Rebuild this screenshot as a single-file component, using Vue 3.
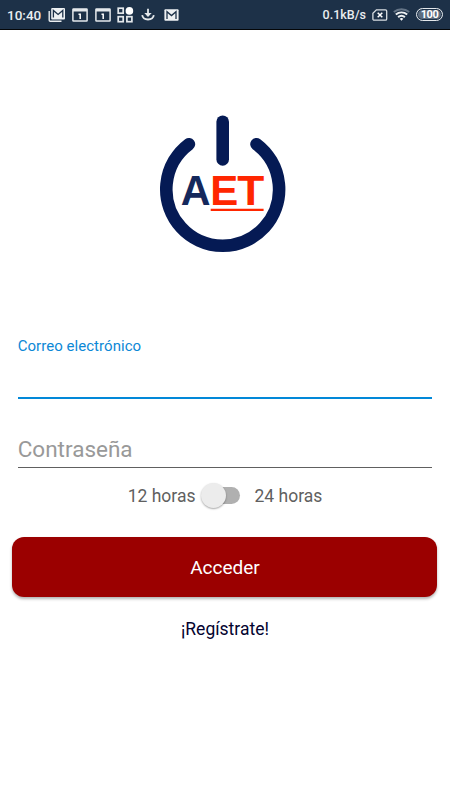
<template>
  <div class="screen">
    <header class="status-bar">
      <span class="clock">10:40</span>
      <div class="notifications">
        <svg class="icon-gallery" width="18" height="16" viewBox="0 0 18 16">
          <path d="M1.2 4v9.2q0 1 1 1h11.3" fill="none" stroke="#e9edf0" stroke-width="1.4" />
          <rect x="3.2" y="1" width="13.8" height="11.6" rx="1" fill="#eef1f3" />
          <path
            d="M5.4 10.6V3.4l4.7 4.1 4.7-4.1v7.2"
            fill="none"
            stroke="#1d3148"
            stroke-width="1.3"
          />
        </svg>
        <svg
          v-for="n in 2"
          :key="n"
          class="icon-calendar"
          width="16"
          height="14"
          viewBox="0 0 16 14"
        >
          <rect x="0.9" y="0.9" width="14.2" height="12.2" rx="0.6" fill="none" stroke="#e4e8eb" stroke-width="1.5" />
          <path d="M1 2.2h14" stroke="#e4e8eb" stroke-width="2.6" />
          <path d="M6.5 6.2h1.7v4.7" fill="none" stroke="#fff" stroke-width="1.5" />
        </svg>
        <svg class="icon-apps" width="17" height="16" viewBox="0 0 17 16">
          <g fill="none" stroke="#e4e8eb" stroke-width="1.7">
            <rect x="1.2" y="1.2" width="5" height="5" />
            <rect x="1.2" y="9.7" width="5" height="5" />
            <rect x="9.9" y="9.7" width="5" height="5" />
          </g>
          <circle cx="12.4" cy="3.9" r="3.8" fill="#fff" />
        </svg>
        <svg class="icon-download" width="14" height="13" viewBox="0 0 14 13">
          <path
            d="M7 .8v7M1.2 7.2c.4 2.7 2.8 4.3 5.8 4.3s5.4-1.6 5.8-4.3"
            fill="none"
            stroke="#e4e8eb"
            stroke-width="1.8"
          />
          <path d="M3.3 5.1h7.4L7 9z" fill="#e4e8eb" />
        </svg>
        <svg class="icon-mail" width="15" height="12" viewBox="0 0 15 12">
          <rect x="0.4" y="0.3" width="14.2" height="11.4" rx="1" fill="#eef1f3" />
          <path d="M3 10.1V2.7l4.5 3.9L12 2.7v7.4" fill="none" stroke="#1d3148" stroke-width="1.3" />
        </svg>
      </div>
      <div class="system">
        <span class="speed">0.1kB/s</span>
        <svg class="icon-sim" width="16" height="12" viewBox="0 0 16 12">
          <path
            d="M4.4.8h9c.8 0 1.3.5 1.3 1.2v8c0 .7-.5 1.2-1.3 1.2H2.2C1.4 11.200.9 10.700.9 10V4.200z"
            fill="none"
            stroke="#d9dee2"
            stroke-width="1.3"
          />
          <path d="M5.7 3.7l4.6 4.6M10.3 3.7L5.7 8.3" stroke="#fff" stroke-width="1.5" />
        </svg>
        <svg class="icon-wifi" width="17" height="13" viewBox="0 0 17 13">
          <g fill="none" stroke-width="2">
            <path d="M.8 4.1c4.5-3.9 10.9-3.9 15.4 0" stroke="#647486" />
            <path d="M2.8 6.5c3.4-2.8 8-2.8 11.4 0" stroke="#eef1f3" />
            <path d="M5.1 9.1c2.1-1.7 4.7-1.7 6.8 0" stroke="#eef1f3" />
          </g>
          <path d="M6.7 10.7q1.8-1.2 3.6 0l-1.8 2z" fill="#fff" />
        </svg>
        <span class="battery">100</span>
      </div>
    </header>

    <main class="login">
      <svg class="logo" width="140" height="150" viewBox="152 108 140 150">
        <g fill="none" stroke="#051a54" stroke-width="12.6" stroke-linecap="round">
          <path d="M188.900 144.200A56.400 56.400 0 1 0 256.500 144.200" />
          <path d="M222.700 121.700v37.700" />
        </g>
        <g class="logo-text">
          <text x="180.8" y="205" textLength="29.8" lengthAdjust="spacingAndGlyphs" fill="#14285c">A</text>
          <text x="210.3" y="205" fill="#ff2600">E</text>
          <text x="237.2" y="205" textLength="27" lengthAdjust="spacingAndGlyphs" fill="#ff2600">T</text>
        </g>
        <path d="M210.700 209.800h52.900" stroke="#ff2600" stroke-width="2.2" />
      </svg>

      <form class="form" @submit.prevent>
        <label class="field field-email">
          <span class="field-label">Correo electrónico</span>
          <input v-model="email" class="field-input" type="email" />
        </label>
        <input
          v-model="password"
          class="field-input field-password"
          type="password"
          placeholder="Contraseña"
        />

        <div class="format">
          <span class="format-label">12 horas</span>
          <button
            type="button"
            class="switch"
            :class="{ on: is24h }"
            @click="is24h = !is24h"
          >
            <span class="track"></span>
            <span class="thumb"></span>
          </button>
          <span class="format-label">24 horas</span>
        </div>

        <button type="submit" class="submit">Acceder</button>
        <a class="register">¡Regístrate!</a>
      </form>
    </main>
  </div>
</template>

<script setup>
import { ref } from "vue";

const email = ref("");
const password = ref("");
const is24h = ref(false);
</script>

<style>
body {
  margin: 0;
  background: #fff;
}
</style>

<style scoped>
.screen {
  width: 450px;
  height: 800px;
  overflow: hidden;
  background: #fff;
  font-family: Roboto, "Noto Sans", sans-serif;
}

.status-bar {
  box-sizing: border-box;
  display: flex;
  align-items: center;
  justify-content: space-between;
  height: 30px;
  padding: 0 7px;
  border-bottom: 1px solid #040608;
  background: #1d3148;
  color: #e9edf0;
}

.clock {
  width: 41px;
  font-size: 13.5px;
  font-weight: 500;
}

.notifications {
  display: flex;
  align-items: center;
  margin-right: auto;
}

.icon-calendar {
  margin-left: 6px;
}

.icon-calendar + .icon-calendar {
  margin-left: 7px;
}

.icon-apps {
  margin-left: 6px;
}

.icon-download {
  margin-left: 7px;
}

.icon-mail {
  margin-left: 9px;
}

.system {
  display: flex;
  align-items: center;
}

.speed {
  font-size: 12.5px;
  font-weight: 500;
}

.icon-sim {
  margin-left: 6px;
}

.icon-wifi {
  margin-left: 5px;
}

.battery {
  box-sizing: border-box;
  width: 27px;
  height: 13px;
  margin-left: 6px;
  border: 1px solid #e4e8eb;
  border-radius: 7px;
  box-shadow: inset 0 0 0 1px #1d3148;
  background: #5c6c7e;
  color: #fff;
  font-size: 11px;
  font-weight: 700;
  line-height: 11px;
  letter-spacing: -0.4px;
  text-align: center;
}

.login {
  display: flex;
  flex-direction: column;
  align-items: center;
  padding-top: 78px;
}

.logo {
  margin-right: 6px;
}

.logo-text {
  font-family: "Liberation Sans", Arial, sans-serif;
  font-size: 42px;
  font-weight: 700;
}

.form {
  display: flex;
  flex-direction: column;
  align-items: center;
  width: 100%;
  padding-top: 79px;
}

.field {
  display: flex;
  flex-direction: column;
  width: 414.6px;
}

.field-label {
  color: #0c88d6;
  font-size: 15px;
  line-height: 18px;
  letter-spacing: 0.04px;
}

.field-input {
  box-sizing: border-box;
  width: 414.6px;
  padding: 0;
  border: 0;
  outline: none;
  background: none;
  color: #222;
  font-family: inherit;
  font-size: 22.5px;
}

.field-email .field-input {
  height: 44px;
  border-bottom: 2px solid #0288d8;
}

.field-password {
  height: 36px;
  margin-top: 33px;
  padding-bottom: 1px;
  border-bottom: 1px solid #606060;
}

.field-password::placeholder {
  color: #999;
  opacity: 1;
}

.format {
  display: flex;
  align-items: center;
  height: 30px;
  margin-top: 12px;
  color: #606060;
  font-size: 17.5px;
}

.format-label {
  padding-top: 2px;
}

.switch {
  position: relative;
  width: 39px;
  height: 28px;
  margin: 0 15px 0 5px;
  padding: 0;
  border: 0;
  background: none;
}

.track {
  position: absolute;
  top: 6px;
  right: 0;
  width: 34px;
  height: 17px;
  border-radius: 9px;
  background: #b0b0b0;
}

.thumb {
  position: absolute;
  top: 2px;
  left: 0;
  width: 25px;
  height: 25px;
  border-radius: 50%;
  background: #ececec;
  box-shadow: 0 1px 2px rgba(0, 0, 0, 0.35);
}

.switch.on .thumb {
  left: 14px;
}

.submit {
  width: 425px;
  height: 60px;
  margin: 27px 1px 0 0;
  padding: 0 0 0 1px;
  border: 0;
  border-radius: 12px;
  background: #9b0000;
  box-shadow: 0 2px 3px rgba(0, 0, 0, 0.3);
  color: #fff;
  font-family: inherit;
  font-size: 19px;
}

.register {
  margin-top: 22px;
  color: #03032f;
  font-size: 17.5px;
  line-height: 21px;
}
</style>
